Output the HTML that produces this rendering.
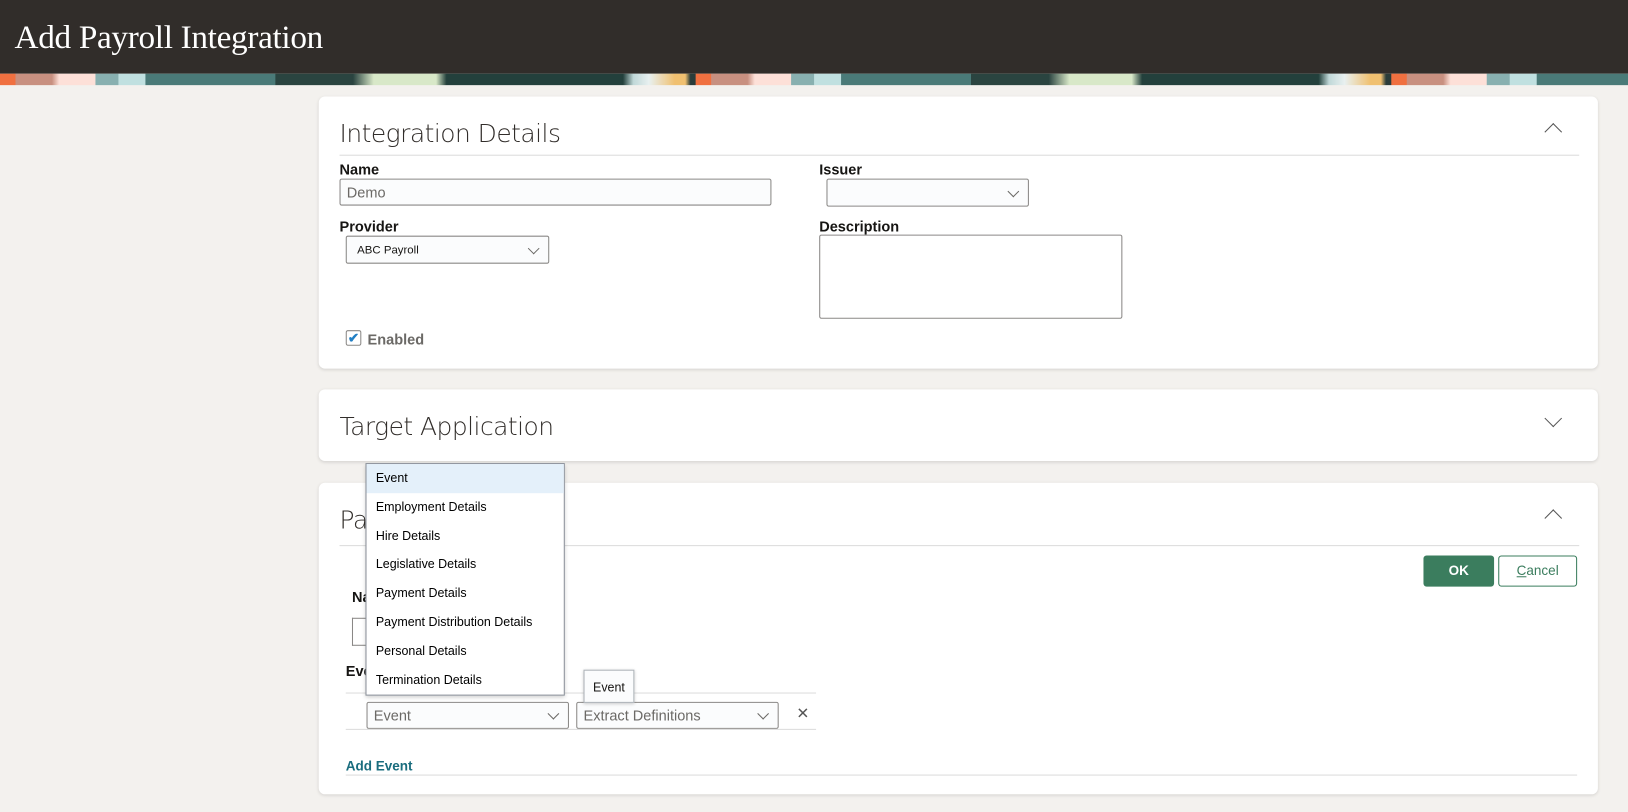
<!DOCTYPE html>
<html><head><meta charset="utf-8"><style>
*{box-sizing:border-box;margin:0;padding:0}
html,body{width:1628px;height:812px;overflow:hidden;background:#f3f1ee}
body{font-family:"Liberation Sans",sans-serif;position:relative;color:#161513}
#w{position:absolute;left:0;top:0;width:1568px;height:782px;transform:scale(1.03827);transform-origin:0 0}
.hdr{position:absolute;left:0;top:0;width:1568px;height:71px;background:#312d2a}
.hdr h1{position:absolute;left:14px;top:17px;font-family:"Liberation Serif",serif;font-weight:normal;font-size:32px;color:#fff;letter-spacing:-0.3px}
.band{position:absolute;left:0;top:71px;width:1568px;height:11px;background:linear-gradient(90deg,#f07040 0,#f07040 15px,#c89080 15px,#c89080 50px,#fde0d8 57px,#fde0d8 92px,#88b0b0 92px,#88b0b0 114px,#c0e0e0 114px,#c0e0e0 140px,#4a7a78 140px,#4a7a78 265px,#2a4440 265px,#2a4440 340px,#d8e8c8 360px,#d8e8c8 420px,#23403c 430px,#23403c 600px,#c0d8d8 610px,#e8f0f0 625px,#f0c070 650px,#f0c070 660px,#2a3c3a 665px,#2a3c3a 670px);background-size:670px 11px}
.card{position:absolute;left:307px;width:1232px;background:#fff;border-radius:6px;box-shadow:0 1px 3px rgba(0,0,0,.12)}
.t{position:absolute;left:20px;font-size:24px;color:#312d2a;font-family:"DejaVu Sans","Liberation Sans",sans-serif;font-weight:200;letter-spacing:-0.5px}
.rule{position:absolute;left:20px;right:18px;height:1px;background:#dcdcdc}
.lbl{position:absolute;font-size:14px;font-weight:bold;color:#161513}
.inp{position:absolute;border:1px solid #8a8886;border-radius:2px;background:#fbfcfd;font-size:14px;color:#6b6966;padding-left:6px;display:flex;align-items:center}
.chev{position:absolute;right:10px;top:50%;width:8px;height:8px;border-right:1px solid #6b6966;border-bottom:1px solid #6b6966;transform:translateY(-70%) rotate(45deg)}
.cv{position:absolute;width:12px;height:12px;border-left:1.5px solid #555;border-top:1.5px solid #555}
.menu{position:absolute;left:352px;top:446px;width:192px;height:224px;background:#fff;border:1px solid #8a9099;box-shadow:0 2px 4px rgba(0,0,0,.2)}
.menu div{height:27.8px;font-size:12px;padding-left:9px;line-height:27px;color:#000}
</style></head><body><div id="w">
<div class="hdr"><h1>Add Payroll Integration</h1></div>
<div class="band"></div>

<div class="card" style="top:93px;height:262px">
 <div class="t" style="top:22px">Integration Details</div>
 <div class="cv" style="left:1183px;top:28px;transform:rotate(45deg)"></div>
 <div class="rule" style="top:56px"></div>
 <div class="lbl" style="left:20px;top:62px">Name</div>
 <div class="inp" style="left:20px;top:79px;width:416px;height:26px">Demo</div>
 <div class="lbl" style="left:20px;top:117px">Provider</div>
 <div class="inp" style="left:26px;top:134px;width:196px;height:27px;font-size:11px;color:#161513;padding-left:10px">ABC Payroll<span class="chev"></span></div>
 <div style="position:absolute;left:26px;top:225px;width:15px;height:15px;border:1px solid #8a8886;border-radius:2px;color:#227fc4;font-size:13px;line-height:13px;text-align:center;font-weight:bold">✔</div>
 <div style="position:absolute;left:47px;top:226px;font-size:14px;color:#6b6966;font-weight:bold">Enabled</div>
 <div class="lbl" style="left:482px;top:62px">Issuer</div>
 <div class="inp" style="left:489px;top:79px;width:195px;height:27px"><span class="chev"></span></div>
 <div class="lbl" style="left:482px;top:117px">Description</div>
 <div style="position:absolute;left:482px;top:133px;width:292px;height:81px;border:1px solid #8a8886;border-radius:2px"></div>
</div>

<div class="card" style="top:375px;height:69px">
 <div class="t" style="top:22px">Target Application</div>
 <div class="cv" style="left:1183px;top:22px;transform:rotate(225deg)"></div>
</div>

<div class="card" style="top:465px;height:300px">
 <div class="t" style="top:22px">Pa</div>
 <div class="cv" style="left:1183px;top:28px;transform:rotate(45deg)"></div>
 <div class="rule" style="top:60px"></div>
 <div style="position:absolute;left:1064px;top:70px;width:68px;height:30px;background:#3b7d5e;border-radius:3px;color:#fff;font-weight:bold;font-size:13px;text-align:center;line-height:30px">OK</div>
 <div style="position:absolute;left:1136px;top:70px;width:76px;height:30px;border:1px solid #3b7d5e;border-radius:3px;color:#3b7d5e;font-size:13px;text-align:center;line-height:28px"><u>C</u>ancel</div>
 <div class="lbl" style="left:32px;top:102px">Na</div>
 <div style="position:absolute;left:32px;top:130px;width:20px;height:27px;border:1px solid #8a8886;border-right:none"></div>
 <div class="lbl" style="left:26px;top:173px">Eve</div>
 <div class="rule" style="left:26px;width:453px;top:202px"></div>
 <div class="inp" style="left:46px;top:211px;width:195px;height:26px;font-size:14px">Event<span class="chev"></span></div>
 <div class="inp" style="left:248px;top:211px;width:195px;height:26px;font-size:14px">Extract Definitions<span class="chev"></span></div>
 <div style="position:absolute;left:460px;top:213px;font-size:15px;color:#555">✕</div>
 <div class="rule" style="left:26px;width:453px;top:237px"></div>
 <div style="position:absolute;left:26px;top:265px;font-size:13px;font-weight:bold;color:#1a6d7e">Add Event</div>
 <div class="rule" style="left:26px;right:20px;top:281px"></div>
</div>

<div class="menu">
 <div style="background:#e4f0fa">Event</div>
 <div>Employment Details</div><div>Hire Details</div><div>Legislative Details</div><div>Payment Details</div><div>Payment Distribution Details</div><div>Personal Details</div><div>Termination Details</div>
</div>
<div style="position:absolute;left:562px;top:645px;width:49px;height:32px;background:#fbfcfd;border:1px solid #aeb4b9;box-shadow:0 1px 3px rgba(0,0,0,.2);font-size:12px;text-align:center;line-height:32px">Event</div>
</div></body></html>
